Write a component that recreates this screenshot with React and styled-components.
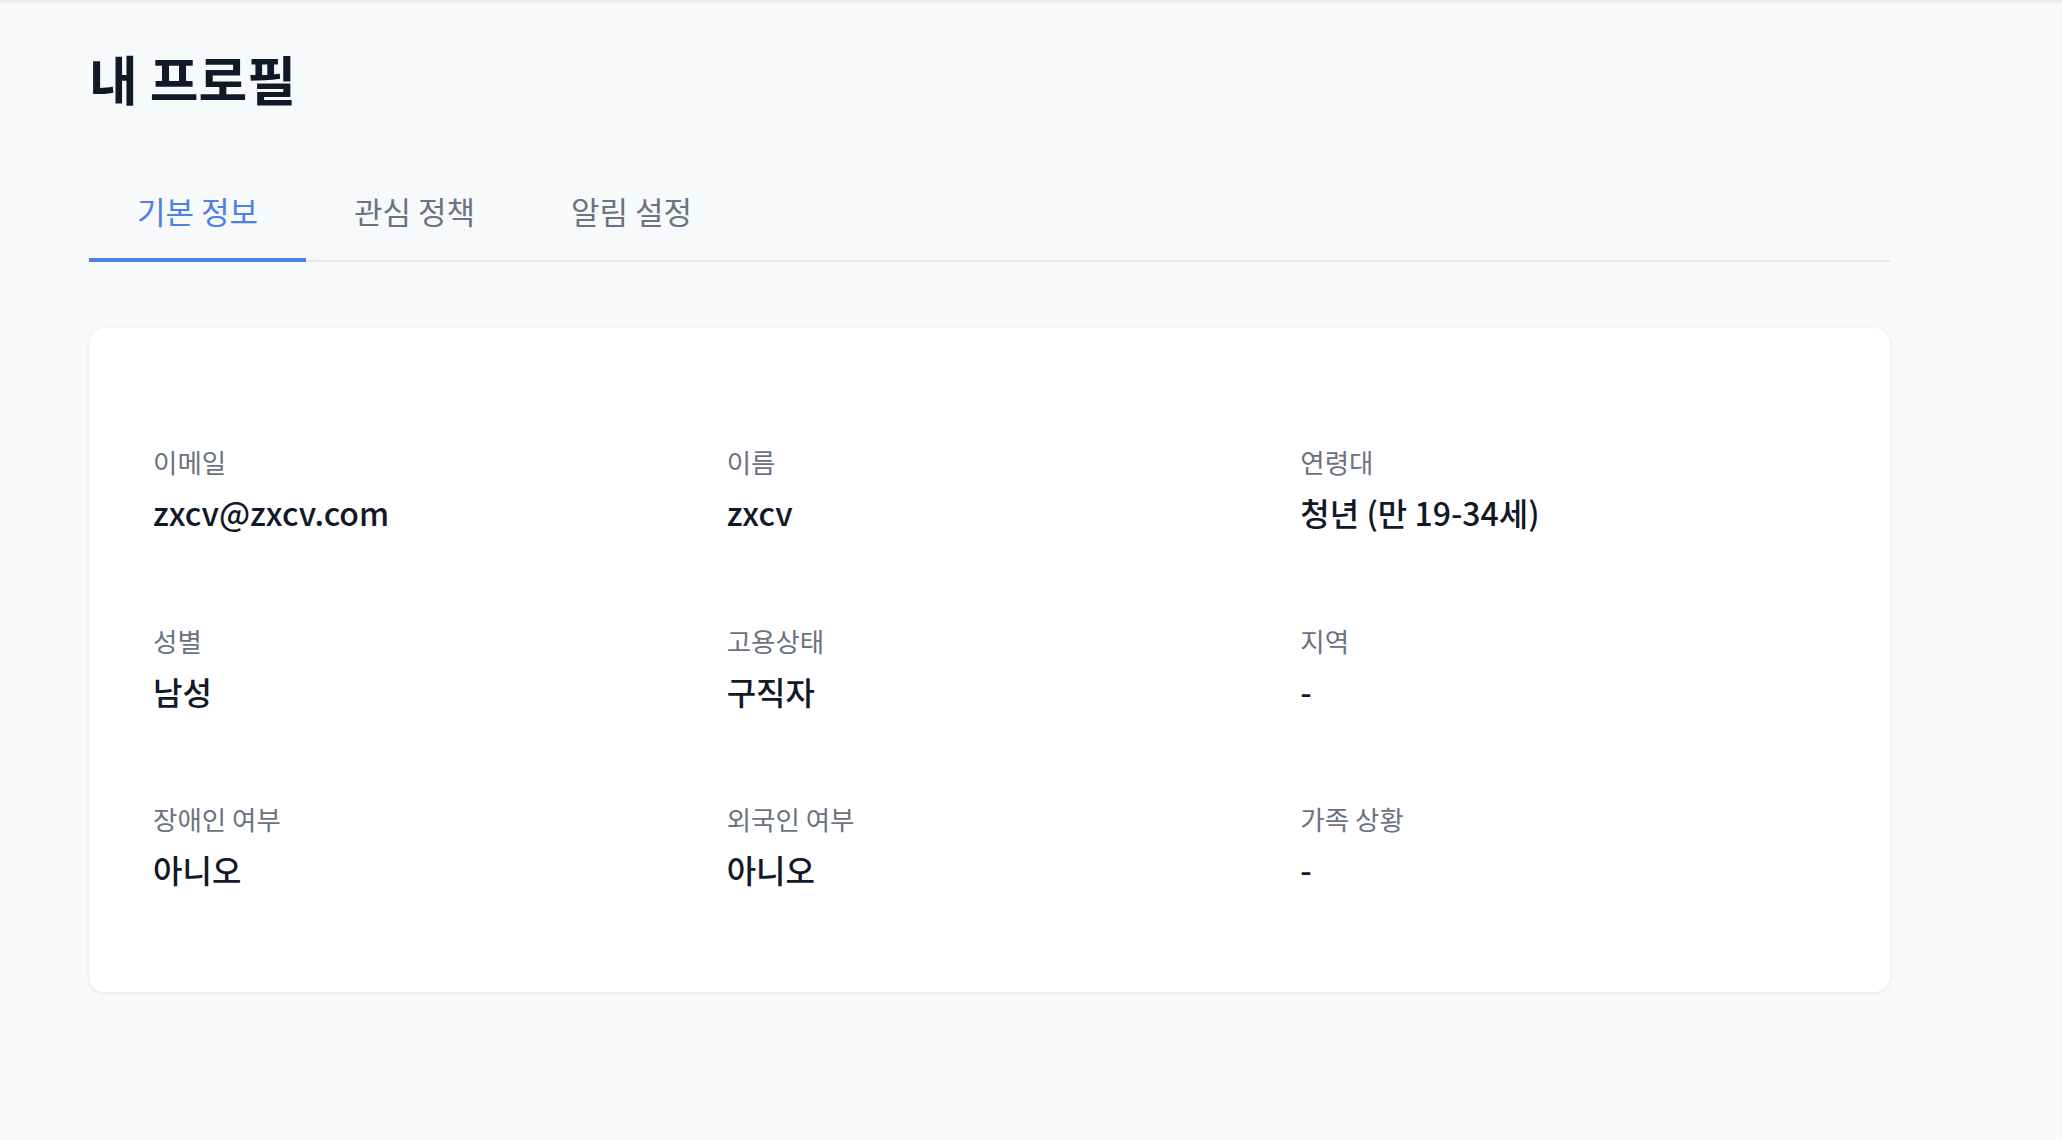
import { useState } from "react";
import styled, { createGlobalStyle } from "styled-components";

const GlobalStyle = createGlobalStyle`
  * {
    box-sizing: border-box;
  }
  body {
    margin: 0;
    background: #f8f9fb;
    font-family: "Noto Sans CJK KR", "Noto Sans", sans-serif;
  }
`;

const Page = styled.div`
  min-height: 100vh;
  padding: 48px 0 0 89px;
  box-shadow: inset 0 4px 5px -3px rgba(0, 0, 0, 0.1);
`;

const Container = styled.div`
  width: 1801px;
`;

const Title = styled.h1`
  margin: 0 0 56px;
  font-size: 53px;
  line-height: 1.15;
  font-weight: 700;
  color: #111827;
`;

const TabBar = styled.div`
  display: flex;
  border-bottom: 2px solid #e5e7eb;
`;

const Tab = styled.button`
  border: none;
  background: none;
  padding: 23px 48px 24px;
  margin: 0;
  font-family: inherit;
  font-size: 31px;
  line-height: 1.5;
  cursor: pointer;
  color: ${(p) => (p.$active ? "#4a80e8" : "#6b7280")};
  border-bottom: 4px solid ${(p) => (p.$active ? "#4a80e8" : "transparent")};
  margin-bottom: -2px;
`;

const Card = styled.div`
  margin-top: 66px;
  background: #fff;
  border-radius: 16px;
  box-shadow: 0 1px 4px rgba(0, 0, 0, 0.08);
  padding: 114px 64px 98px;
`;

const Grid = styled.div`
  display: grid;
  grid-template-columns: repeat(3, 1fr);
  column-gap: 48px;
  row-gap: 83px;
`;

const Field = styled.div`
  display: flex;
  flex-direction: column;
  gap: 6px;
`;

const Label = styled.span`
  font-size: 26.5px;
  line-height: 1.5;
  color: #6b7280;
`;

const Value = styled.span`
  font-size: 32px;
  line-height: 1.55;
  font-weight: 500;
  color: #111827;
`;

const tabs = ["기본 정보", "관심 정책", "알림 설정"];

const fields = [
  { label: "이메일", value: "zxcv@zxcv.com" },
  { label: "이름", value: "zxcv" },
  { label: "연령대", value: "청년 (만 19-34세)" },
  { label: "성별", value: "남성" },
  { label: "고용상태", value: "구직자" },
  { label: "지역", value: "-" },
  { label: "장애인 여부", value: "아니오" },
  { label: "외국인 여부", value: "아니오" },
  { label: "가족 상황", value: "-" },
];

const App = () => {
  const [active, setActive] = useState(0);

  return (
    <>
      <GlobalStyle />
      <Page>
        <Container>
          <Title>내 프로필</Title>
          <TabBar>
            {tabs.map((t, i) => (
              <Tab key={t} $active={i === active} onClick={() => setActive(i)}>
                {t}
              </Tab>
            ))}
          </TabBar>
          <Card>
            <Grid>
              {fields.map((f) => (
                <Field key={f.label}>
                  <Label>{f.label}</Label>
                  <Value>{f.value}</Value>
                </Field>
              ))}
            </Grid>
          </Card>
        </Container>
      </Page>
    </>
  );
};

export default App;
